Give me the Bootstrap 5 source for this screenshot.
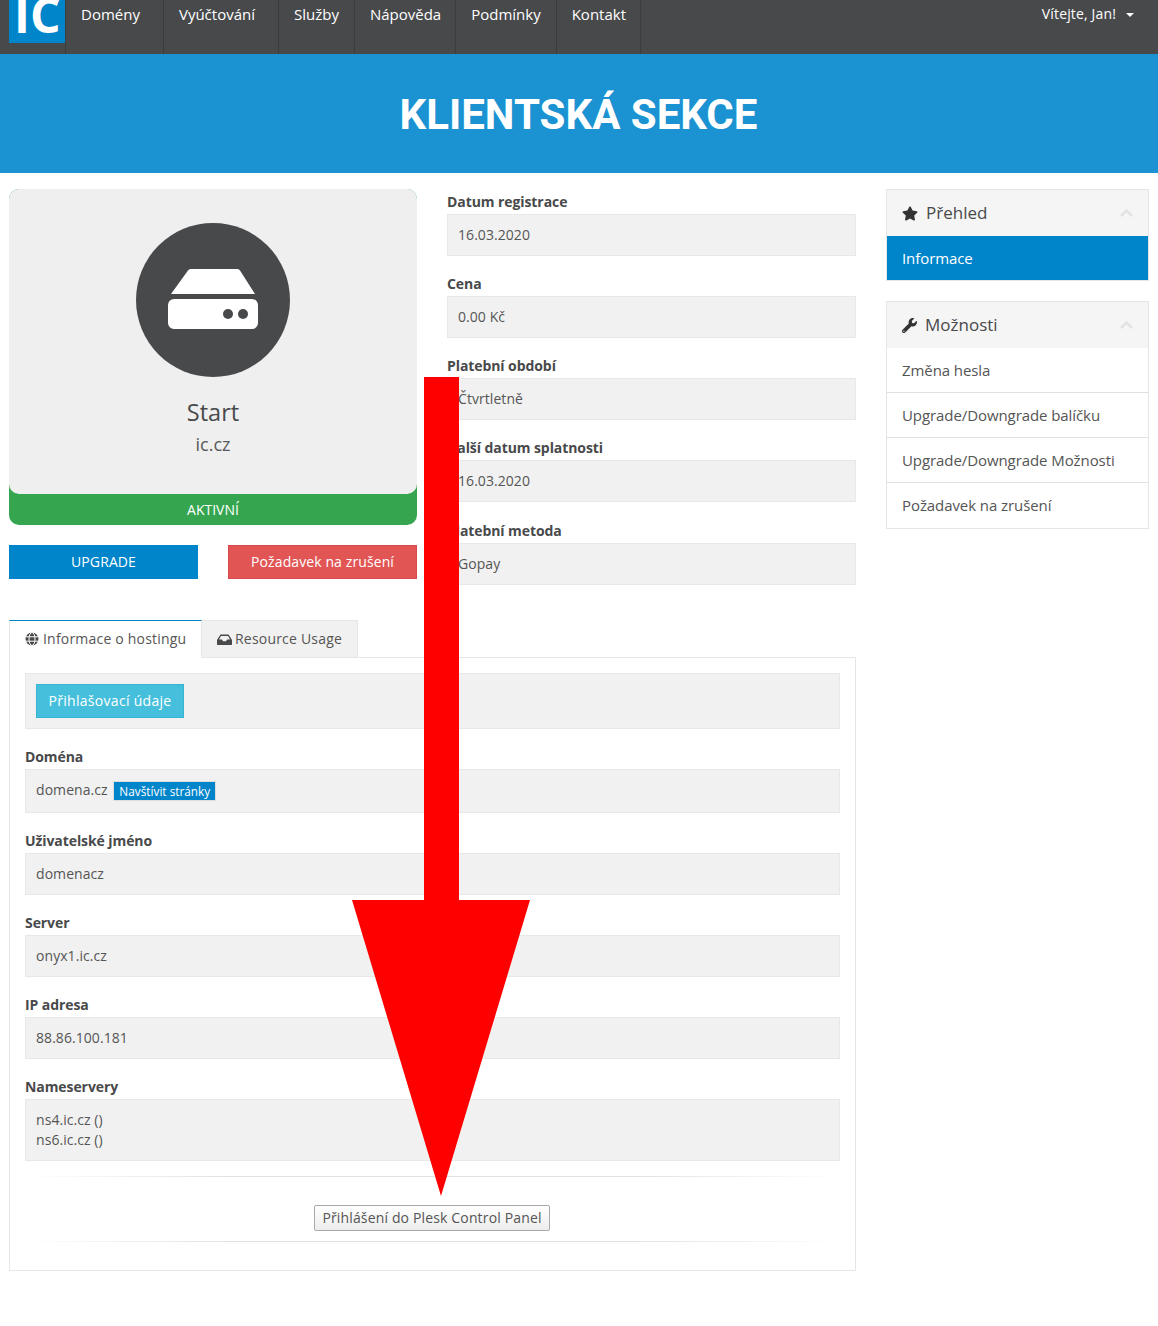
<!DOCTYPE html>
<html lang="cs">
<head>
<meta charset="utf-8">
<title>Klientská sekce</title>
<link rel="stylesheet" href="https://cdn.jsdelivr.net/npm/bootstrap@5.3.0/dist/css/bootstrap.min.css">
<style>
html,body{margin:0;background:#fff}
body{font-family:"Open Sans","Liberation Sans",sans-serif;font-size:14px;color:#555;position:relative;height:1326px;overflow:hidden}
.topbar{height:54px;background:#48494b}
.logobox{width:56px;height:43px;margin-left:9px;background:#0085cb;overflow:hidden;color:#fff;font-weight:700;font-size:48px;line-height:29px;padding-left:5px;flex:none}
.topbar .nav{height:54px;margin:0}
.topbar .nav-link{height:54px;color:#fff;font-size:15px;line-height:20px;padding:4px 15px 0 15px;border-left:1px solid #3b3c3e}
.topbar .nav-item:last-child .nav-link{border-right:1px solid #3b3c3e}
.topbar .nav-link.wide{padding-right:23px}
.topbar .nav-link.tight{padding-right:14px}
.welcome{color:#fff;font-size:14px;line-height:20px;padding:4px 24px 0 0;letter-spacing:.15px}
.welcome i{display:inline-block;border:4px solid transparent;border-top-color:#fff;border-bottom:0;margin-left:10px;vertical-align:middle}
.banner{height:119px;background:#1b92d1;color:#fff;font-family:Roboto,"Liberation Sans",sans-serif;font-weight:700;font-size:42px;line-height:121px;text-align:center;margin:0;padding-right:1px}
.pagewrap{padding:16px 9px 0;gap:30px}
.maincol{width:847px;flex:none}
.sidecol{width:263px;flex:none}
.upper{gap:30px}
.leftbox{width:408px;flex:none}
.rightbox{width:409px;flex:none}
.prodcard{background:#35a64f;border-radius:10px;height:336px;border:0}
.prodinner{background:#efefef;border-radius:10px;height:305px;text-align:center;padding-top:34px}
.circle{width:154px;height:154px;border-radius:50%;background:#48494b;margin:0 auto;display:flex;align-items:center;justify-content:center}
.prodname{font-size:23.5px;line-height:30px;margin-top:20px;color:#48494b}
.proddom{font-size:18px;line-height:24px;margin-top:5px;color:#58595b}
.prodstatus{color:#fff;font-size:14px;line-height:31px;text-align:center}
.actbtns{margin-top:20px;gap:30px}
.actbtn{flex:1;height:34px;border-radius:0;font-size:14px;line-height:32px;padding:0;color:#fff;letter-spacing:.1px}
.actblue{background:#0085cb;border:1px solid #0085cb}
.actred{background:#e25555;border:1px solid #d9494a}
.actblue:hover{background:#0085cb;color:#fff}
.fldlabel{display:block;margin:0;font-weight:700;font-size:14px;line-height:25px;color:#48494b;letter-spacing:-.08px}
.fld{background:#f1f1f1;border:1px solid #e8e8e8;padding:10px;font-size:14px;line-height:20px;margin-bottom:15px;color:#555;letter-spacing:.06px}
.fld:last-child{margin-bottom:0}
.lastlabel{padding-top:1px}
.tabbar{margin-top:35px;height:38px;border:0;position:relative;z-index:1}
.tabitem{height:38px;border:1px solid #e6e6e6;background:#f1f1f1;border-radius:0;padding:8px 15px 0;font-size:14px;line-height:20px;color:#555;margin:0;letter-spacing:.2px}
.tabon{background:#fff;border-top:1px solid #0085cb;border-bottom:1px solid #fff;width:193px;padding-right:0}
.taboff{width:156px;border-left:0;padding-left:15px;padding-right:0}
.tabbody{border:1px solid #e6e6e6;margin-top:-1px;padding:15px;height:614px}
.tabicon{vertical-align:-2px;margin-right:3px}
.tabon .tabicon{margin-right:4px}
.infobtn{background:#46bfdc;border:1px solid #35b5d5;color:#fff;border-radius:0;height:34px;font-size:14px;line-height:32px;padding:0;display:block;width:148px;letter-spacing:.3px}
.wellbtn{padding:10px}
.visit{display:inline-block;background:#0085cb;border:1px solid #ddd;color:#fff;font-size:11.800px;line-height:18px;padding:0 5px;margin-left:2px;vertical-align:-1px;height:20px;letter-spacing:0}
.fldtall{height:44px}
.fadeline{height:1px;margin:0;border:0;background:linear-gradient(90deg,rgba(220,220,220,0),#e2e2e2 25%,#e2e2e2 75%,rgba(220,220,220,0));opacity:1}
.plesk{display:block;margin:28px 0 10px 289px;width:236px;height:26px;padding:0;border:1px solid #a9a9a9;border-radius:2px;background:linear-gradient(#fff,#ededed);font-size:14px;line-height:24px;color:#555;font-family:inherit;letter-spacing:.15px}
.sidepanel{border:1px solid #e6e6e6;border-radius:0;margin-bottom:20px}
.sidehead{height:46px;background:#f5f5f5;border:0;border-radius:0;font-size:17px;line-height:46px;padding:0 15px;color:#48494b;display:flex;align-items:center}
.sidehead svg.ic{margin-right:8px}
.sidehead .chev{margin-left:auto}
.sideitem{border:0;border-bottom:1px solid #e0e0e0;border-radius:0;padding:0 15px;font-size:15px;line-height:45px;height:45px;color:#555;background:#fff;letter-spacing:-.08px}
.sideitem:last-child{border-bottom:0}
.sideon{background:#0085cb;color:#fff;height:44px;line-height:44px}
.overarrow{position:absolute;left:0;top:0;z-index:5;pointer-events:none}
</style>
</head>
<body>
<nav class="navbar p-0 topbar d-flex flex-nowrap align-items-start">
  <div class="logobox">IC</div>
  <ul class="nav flex-nowrap">
    <li class="nav-item"><a class="nav-link wide" href="#">Domény</a></li>
    <li class="nav-item"><a class="nav-link wide" href="#">Vyúčtování</a></li>
    <li class="nav-item"><a class="nav-link" href="#">Služby</a></li>
    <li class="nav-item"><a class="nav-link tight" href="#">Nápověda</a></li>
    <li class="nav-item"><a class="nav-link" href="#">Podmínky</a></li>
    <li class="nav-item"><a class="nav-link tight" href="#">Kontakt</a></li>
  </ul>
  <div class="welcome ms-auto">Vítejte, Jan!<i></i></div>
</nav>
<h1 class="banner">KLIENTSKÁ SEKCE</h1>
<div class="d-flex pagewrap">
  <div class="maincol">
    <div class="d-flex upper">
      <div class="leftbox">
        <div class="card prodcard">
          <div class="prodinner">
            <div class="circle">
              <svg width="90" height="62" viewBox="0 0 90 62"><path d="M20 1.500 A3 3 0 0 1 22.500 0 H69.500 A3 3 0 0 1 72 1.500 L87 25 H3 Z" fill="#fff"/><rect y="30" width="90" height="30" rx="6" fill="#fff"/><circle cx="60" cy="45" r="5" fill="#48494b"/><circle cx="75" cy="45" r="5" fill="#48494b"/></svg>
            </div>
            <div class="prodname">Start</div>
            <div class="proddom">ic.cz</div>
          </div>
          <div class="prodstatus">AKTIVNÍ</div>
        </div>
        <div class="d-flex actbtns">
          <a href="#" class="btn actbtn actblue">UPGRADE</a>
          <a href="#" class="btn actbtn actred">Požadavek na zrušení</a>
        </div>
      </div>
      <div class="rightbox">
        <label class="fldlabel">Datum registrace</label>
        <div class="fld">16.03.2020</div>
        <label class="fldlabel">Cena</label>
        <div class="fld">0.00 Kč</div>
        <label class="fldlabel">Platební období</label>
        <div class="fld">Čtvrtletně</div>
        <label class="fldlabel">Další datum splatnosti</label>
        <div class="fld">16.03.2020</div>
        <label class="fldlabel lastlabel">Platební metoda</label>
        <div class="fld">Gopay</div>
      </div>
    </div>
    <ul class="nav d-flex tabbar">
      <li class="tabitem tabon">
        <svg class="tabicon" width="14" height="14" viewBox="0 0 14 14"><circle cx="7" cy="7" r="6.500" fill="#48494b"/><g fill="none" stroke="#fff" stroke-width="1"><ellipse cx="7" cy="7" rx="3" ry="6.500"/><path d="M0.500 4.800H13.500M0.500 9.200H13.500"/></g></svg>Informace o hostingu
      </li>
      <li class="tabitem taboff">
        <svg class="tabicon" width="15" height="13" viewBox="0 0 15 13"><path d="M3.500 1.500H11.500L15 7V11.500Q15 12 14 12H1Q0 12 0 11.500V7ZM4 3 2 6.500H5L6 8.300H9L10 6.500H13L11 3Z" fill="#48494b" fill-rule="evenodd"/></svg>Resource Usage
      </li>
    </ul>
    <div class="tabbody">
      <div class="fld wellbtn"><a href="#" class="btn infobtn">Přihlašovací údaje</a></div>
      <label class="fldlabel">Doména</label>
      <div class="fld fldtall">domena.cz <span class="visit">Navštívit stránky</span></div>
      <label class="fldlabel">Uživatelské jméno</label>
      <div class="fld">domenacz</div>
      <label class="fldlabel">Server</label>
      <div class="fld">onyx1.ic.cz</div>
      <label class="fldlabel">IP adresa</label>
      <div class="fld">88.86.100.181</div>
      <label class="fldlabel">Nameservery</label>
      <div class="fld">ns4.ic.cz ()<br>ns6.ic.cz ()</div>
      <hr class="fadeline">
      <button class="plesk" type="button">Přihlášení do Plesk Control Panel</button>
      <hr class="fadeline">
    </div>
  </div>
  <div class="sidecol">
    <div class="list-group sidepanel">
      <div class="sidehead">
        <svg class="ic" width="16" height="15" viewBox="0 0 576 512"><path fill="#333" d="M259.3 17.8L194 150.2 47.900 171.500c-26.200 3.800-36.700 36.100-17.700 54.600l105.700 103-25 145.500c-4.500 26.300 23.200 46 46.400 33.700L288 439.600l130.700 68.700c23.200 12.200 50.900-7.400 46.400-33.700l-25-145.500 105.700-103c19-18.500 8.500-50.800-17.700-54.600L382 150.200 316.700 17.800c-11.700-23.600-45.600-23.900-57.400 0z"/></svg>Přehled
        <svg class="chev" width="13" height="8" viewBox="0 0 13 8"><path d="M1 7 6.500 1.500 12 7" fill="none" stroke="#e2e2e2" stroke-width="2.500"/></svg>
      </div>
      <a href="#" class="list-group-item sideitem sideon">Informace</a>
    </div>
    <div class="list-group sidepanel">
      <div class="sidehead">
        <svg class="ic" width="15" height="15" viewBox="0 0 512 512"><path fill="#333" d="M507.730 109.100c-2.240-9.030-13.540-12.090-20.120-5.510l-74.360 74.360-67.880-11.310-11.310-67.880 74.360-74.360c6.620-6.620 3.430-17.900-5.660-20.160-47.380-11.740-99.550.91-136.580 37.930-39.640 39.640-50.550 97.100-34.050 147.200L18.740 402.760c-24.990 24.990-24.990 65.510 0 90.500 24.990 24.990 65.510 24.990 90.500 0l213.210-213.210c50.120 16.710 107.470 5.680 147.370-34.220 37.070-37.070 49.700-89.320 37.910-136.730zM64 472c-13.250 0-24-10.750-24-24 0-13.260 10.750-24 24-24s24 10.740 24 24c0 13.250-10.750 24-24 24z"/></svg>Možnosti
        <svg class="chev" width="13" height="8" viewBox="0 0 13 8"><path d="M1 7 6.500 1.500 12 7" fill="none" stroke="#e2e2e2" stroke-width="2.500"/></svg>
      </div>
      <a href="#" class="list-group-item sideitem">Změna hesla</a>
      <a href="#" class="list-group-item sideitem">Upgrade/Downgrade balíčku</a>
      <a href="#" class="list-group-item sideitem">Upgrade/Downgrade Možnosti</a>
      <a href="#" class="list-group-item sideitem">Požadavek na zrušení</a>
    </div>
  </div>
</div>
<svg class="overarrow" width="1158" height="1326" viewBox="0 0 1158 1326"><polygon points="424,377 459,377 459,900 530,900 441,1196 352,900 424,900" fill="#f00"/></svg>
<script src="https://cdn.jsdelivr.net/npm/bootstrap@5.3.0/dist/js/bootstrap.bundle.min.js"></script>
</body>
</html>
